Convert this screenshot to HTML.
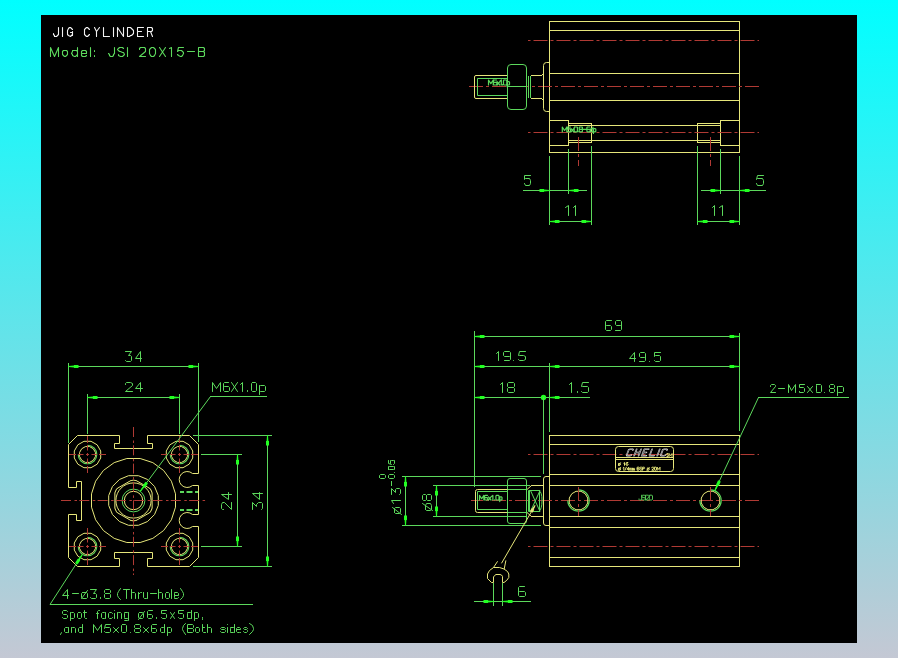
<!DOCTYPE html>
<html><head><meta charset="utf-8"><style>
html,body{margin:0;padding:0;width:898px;height:658px;overflow:hidden;font-family:"Liberation Sans",sans-serif}
body{background:linear-gradient(to bottom,#00ffff 0%,#c4c8d4 100%);position:relative}
#cad{position:absolute;left:41px;top:15px;width:816px;height:628px;background:#000}
svg{position:absolute;left:0;top:0}
</style></head><body>
<div id="cad"></div>
<svg width="898" height="658" viewBox="0 0 898 658" shape-rendering="auto">
<path d="M58.50,27.50L58.50,33.50L58.50,33.50L58.50,34.50L57.50,35.50L56.50,36.50L55.50,36.50L54.50,36.50L54.50,35.50L53.50,34.50L53.50,33.50L53.50,33.50M62.50,27.50L62.50,36.50M72.50,29.50L71.50,28.50L70.50,27.50L69.50,27.50L68.50,28.50L67.50,30.50L67.50,31.50L67.50,33.50L67.50,34.50L68.50,35.50L70.50,36.50L71.50,35.50L72.50,34.50L72.50,33.50L72.50,31.50L72.50,35.50M72.50,32.50L70.50,32.50" stroke="#f2f2f2" stroke-width="1.1" fill="none" stroke-linecap="round" stroke-linejoin="round"/>
<path d="M89.50,29.50L88.50,28.50L87.50,27.50L86.50,27.50L85.50,28.50L84.50,29.50L84.50,30.50L84.50,31.50L84.50,33.50L84.50,34.50L85.50,35.50L86.50,36.50L87.50,36.50L88.50,35.50L89.50,34.50M94.50,27.50L96.50,31.50L99.50,27.50M96.50,31.50L96.50,36.50M103.50,27.50L103.50,36.50L109.50,36.50M113.50,27.50L113.50,36.50M117.50,36.50L117.50,27.50L123.50,36.50L123.50,27.50M127.50,27.50L129.50,27.50L129.50,27.50L130.50,27.50L131.50,28.50L132.50,29.50L133.50,30.50L133.50,31.50L133.50,33.50L132.50,34.50L131.50,35.50L130.50,35.50L129.50,36.50L127.50,36.50L127.50,27.50M143.50,27.50L137.50,27.50L137.50,36.50L143.50,36.50M137.50,31.50L141.50,31.50M147.50,36.50L147.50,27.50L150.50,27.50L150.50,27.50L151.50,27.50L152.50,28.50L152.50,29.50L152.50,30.50L151.50,31.50L150.50,31.50L147.50,31.50M150.50,31.50L152.50,36.50" stroke="#f2f2f2" stroke-width="1.1" fill="none" stroke-linecap="round" stroke-linejoin="round"/>
<path d="M50.50,56.50L50.50,47.50L54.50,56.50L58.50,47.50L58.50,56.50M67.50,53.50L67.50,51.50L66.50,50.50L65.50,50.50L64.50,50.50L63.50,50.50L62.50,51.50L62.50,53.50L62.50,54.50L63.50,55.50L64.50,56.50L65.50,56.50L66.50,55.50L67.50,54.50L67.50,53.50M77.50,47.50L77.50,56.50M77.50,53.50L77.50,51.50L76.50,50.50L75.50,50.50L74.50,50.50L72.50,50.50L72.50,51.50L71.50,53.50L72.50,54.50L72.50,55.50L74.50,56.50L75.50,56.50L76.50,55.50L77.50,54.50L77.50,53.50M81.50,53.50L86.50,53.50L86.50,53.50L86.50,51.50L85.50,50.50L84.50,50.50L83.50,50.50L82.50,50.50L81.50,51.50L81.50,52.50L81.50,54.50L81.50,55.50L82.50,56.50L84.50,56.50L85.50,56.50L86.50,55.50M90.50,47.50L90.50,56.50M94.50,50.50L94.50,51.50M94.50,55.50L94.50,56.50" stroke="#5cd85c" stroke-width="1.1" fill="none" stroke-linecap="round" stroke-linejoin="round"/>
<path d="M114.50,47.50L114.50,53.50L114.50,53.50L113.50,54.50L113.50,55.50L112.50,56.50L111.50,56.50L110.50,56.50L109.50,55.50L109.50,54.50L108.50,53.50L108.50,53.50M123.50,48.50L122.50,47.50L121.50,47.50L119.50,47.50L118.50,48.50L117.50,49.50L118.50,50.50L119.50,51.50L120.50,51.50L120.50,51.50L122.50,52.50L123.50,52.50L124.50,54.50L123.50,55.50L122.50,56.50L120.50,56.50L118.50,55.50L118.50,54.50M127.50,47.50L127.50,56.50" stroke="#5cd85c" stroke-width="1.1" fill="none" stroke-linecap="round" stroke-linejoin="round"/>
<path d="M139.50,49.50L139.50,48.50L140.50,47.50L142.50,47.50L143.50,47.50L144.50,47.50L145.50,48.50L145.50,50.50L145.50,51.50L139.50,56.50L145.50,56.50M155.50,51.50L155.50,49.50L154.50,48.50L153.50,47.50L152.50,47.50L151.50,47.50L150.50,48.50L149.50,49.50L149.50,51.50L149.50,53.50L150.50,55.50L151.50,56.50L152.50,56.50L153.50,56.50L154.50,55.50L155.50,53.50L155.50,51.50M159.50,47.50L165.50,56.50M165.50,47.50L159.50,56.50M169.50,48.50L171.50,47.50L171.50,56.50M183.50,47.50L178.50,47.50L177.50,51.50L178.50,50.50L179.50,50.50L181.50,50.50L182.50,51.50L183.50,52.50L183.50,53.50L182.50,55.50L181.50,56.50L180.50,56.50L178.50,55.50L177.50,54.50M187.50,51.50L194.50,51.50M198.50,51.50L202.50,51.50L202.50,51.50L203.50,51.50L204.50,52.50L204.50,53.50L204.50,55.50L203.50,56.50L202.50,56.50L198.50,56.50L198.50,47.50L202.50,47.50L202.50,47.50L203.50,47.50L204.50,48.50L204.50,49.50L204.50,50.50L203.50,51.50L202.50,51.50" stroke="#5cd85c" stroke-width="1.1" fill="none" stroke-linecap="round" stroke-linejoin="round"/>
<rect x="549" y="21" width="191" height="1" fill="#e6e67a"/>
<rect x="549" y="152" width="191" height="1" fill="#e6e67a"/>
<rect x="549" y="21" width="1" height="132" fill="#e6e67a"/>
<rect x="739" y="21" width="1" height="132" fill="#e6e67a"/>
<rect x="549" y="30" width="191" height="1" fill="#e6e67a"/>
<rect x="549" y="73" width="191" height="1" fill="#e6e67a"/>
<rect x="549" y="100" width="191" height="1" fill="#e6e67a"/>
<rect x="549" y="120" width="20" height="1" fill="#e6e67a"/>
<rect x="549" y="145" width="20" height="1" fill="#e6e67a"/>
<rect x="549" y="120" width="1" height="26" fill="#e6e67a"/>
<rect x="568" y="120" width="1" height="26" fill="#e6e67a"/>
<rect x="720" y="120" width="20" height="1" fill="#e6e67a"/>
<rect x="720" y="145" width="20" height="1" fill="#e6e67a"/>
<rect x="720" y="120" width="1" height="26" fill="#e6e67a"/>
<rect x="739" y="120" width="1" height="26" fill="#e6e67a"/>
<rect x="568" y="123" width="24" height="1" fill="#e6e67a"/>
<rect x="568" y="142" width="24" height="1" fill="#e6e67a"/>
<rect x="568" y="123" width="1" height="20" fill="#e6e67a"/>
<rect x="591" y="123" width="1" height="20" fill="#e6e67a"/>
<rect x="697" y="123" width="24" height="1" fill="#e6e67a"/>
<rect x="697" y="142" width="24" height="1" fill="#e6e67a"/>
<rect x="697" y="123" width="1" height="20" fill="#e6e67a"/>
<rect x="720" y="123" width="1" height="20" fill="#e6e67a"/>
<rect x="568" y="125" width="153" height="1" fill="#e6e67a"/>
<rect x="568" y="140" width="153" height="1" fill="#e6e67a"/>
<line x1="528" y1="40.5" x2="759" y2="40.5" stroke="#b03a34" stroke-width="1" stroke-dasharray="14 3 3 3" stroke-dashoffset="17.5"/>
<line x1="469" y1="86.5" x2="759" y2="86.5" stroke="#b03a34" stroke-width="1" stroke-dasharray="14 3 3 3" stroke-dashoffset="0"/>
<line x1="528" y1="132.5" x2="759" y2="132.5" stroke="#b03a34" stroke-width="1" stroke-dasharray="14 3 3 3" stroke-dashoffset="17.5"/>
<line x1="578.5" y1="137" x2="578.5" y2="166" stroke="#b03a34" stroke-width="1" stroke-dasharray="14 3 3 3" stroke-dashoffset="0"/>
<line x1="710.5" y1="137" x2="710.5" y2="166" stroke="#b03a34" stroke-width="1" stroke-dasharray="14 3 3 3" stroke-dashoffset="0"/>
<path d="M507.5,75.5 L476,75.5 Q474.5,75.5 474.5,77 L474.5,97 Q474.5,98.5 476,98.5 L507.5,98.5" stroke="#e6e67a" stroke-width="1" fill="none" />
<rect x="531" y="75" width="11" height="1" fill="#e6e67a"/>
<rect x="531" y="98" width="11" height="1" fill="#e6e67a"/>
<path d="M549,62.5 L546.5,62.5 Q543.5,62.5 543.5,65.5 L543.5,108.5 Q543.5,111.5 546.5,111.5 L549,111.5" stroke="#e6e67a" stroke-width="1" fill="none" />
<line x1="541.5" y1="75.5" x2="543.5" y2="73.5" stroke="#e6e67a" stroke-width="1"/>
<line x1="541.5" y1="98.5" x2="543.5" y2="100.5" stroke="#e6e67a" stroke-width="1"/>
<path d="M507,78.5 L477.5,78.5 L477.5,95.5 L507,95.5" stroke="#5cd85c" stroke-width="1" fill="none" />
<rect x="507.5" y="64.5" width="19" height="45" rx="3.5" ry="3.5" fill="none" stroke="#5cd85c" stroke-width="1"/>
<rect x="507" y="86" width="20" height="1" fill="#5cd85c"/>
<rect x="528" y="76" width="1" height="22" fill="#5cd85c"/>
<rect x="530" y="76" width="1" height="22" fill="#5cd85c"/>
<path d="M488.50,85.00L488.50,80.00L490.86,83.61L493.22,80.00L493.22,85.00M496.53,80.00L494.03,80.00L493.48,80.56L493.48,84.44L494.03,85.00L496.25,85.00L496.81,84.44L496.81,82.94L496.25,82.39L494.03,82.39L493.48,82.94M497.06,81.67L499.84,85.00M499.84,81.67L497.06,85.00M500.10,81.00L501.32,80.00L501.32,85.00M502.49,84.72L502.49,85.00M504.02,80.00L506.25,80.00L506.80,80.56L506.80,84.44L506.25,85.00L504.02,85.00L503.47,84.44L503.47,80.56L504.02,80.00M507.06,81.67L507.06,86.67M507.06,82.22L507.61,81.67L508.94,81.67L509.50,82.22L509.50,84.44L508.94,85.00L507.61,85.00L507.06,84.44" stroke="#5cd85c" stroke-width="1.2" fill="none" stroke-linecap="round" stroke-linejoin="round"/>
<path d="M562.30,131.80L562.30,127.00L564.57,130.47L566.83,127.00L566.83,131.80M570.54,127.00L567.60,127.00L567.34,129.13L567.87,128.87L570.00,128.87L570.54,129.40L570.54,131.27L570.00,131.80L567.87,131.80L567.34,131.27M571.04,128.60L573.71,131.80M573.71,128.60L571.04,131.80M574.75,127.00L576.88,127.00L577.41,127.53L577.41,131.27L576.88,131.80L574.75,131.80L574.21,131.27L574.21,127.53L574.75,127.00M578.02,131.53L578.02,131.80M579.76,129.29L579.22,128.76L579.22,127.53L579.76,127.00L581.89,127.00L582.42,127.53L582.42,128.76L581.89,129.29L579.76,129.29L579.22,129.83L579.22,131.27L579.76,131.80L581.89,131.80L582.42,131.27L582.42,129.83L581.89,129.29M582.93,129.40L586.39,129.40M589.83,127.00L587.43,127.00L586.90,127.53L586.90,131.27L587.43,131.80L589.56,131.80L590.10,131.27L590.10,129.83L589.56,129.29L587.43,129.29L586.90,129.83M592.95,127.00L592.95,131.80M592.95,129.13L592.42,128.60L591.14,128.60L590.60,129.13L590.60,131.27L591.14,131.80L592.42,131.80L592.95,131.27M593.45,128.60L593.45,133.40M593.45,129.13L593.99,128.60L595.27,128.60L595.80,129.13L595.80,131.27L595.27,131.80L593.99,131.80L593.45,131.27" stroke="#5cd85c" stroke-width="1.2" fill="none" stroke-linecap="round" stroke-linejoin="round"/>
<rect x="549" y="156" width="1" height="69" fill="#5cd85c"/>
<rect x="568" y="149" width="1" height="45" fill="#5cd85c"/>
<rect x="591" y="146" width="1" height="79" fill="#5cd85c"/>
<rect x="697" y="146" width="1" height="79" fill="#5cd85c"/>
<rect x="720" y="149" width="1" height="45" fill="#5cd85c"/>
<rect x="739" y="156" width="1" height="69" fill="#5cd85c"/>
<rect x="523" y="190" width="64" height="1" fill="#5cd85c"/>
<path d="M549.50,191.00 L544.00,191.40 L544.00,192.00 L539.50,192.00 L539.50,189.00 L544.00,189.00 L544.00,189.60 L549.50,190.00 Z" fill="#22ff22"/>
<path d="M568.50,190.00 L574.00,189.60 L574.00,189.00 L578.50,189.00 L578.50,192.00 L574.00,192.00 L574.00,191.40 L568.50,191.00 Z" fill="#22ff22"/>
<rect x="549" y="221" width="43" height="1" fill="#5cd85c"/>
<path d="M549.50,221.00 L555.00,220.60 L555.00,220.00 L559.50,220.00 L559.50,223.00 L555.00,223.00 L555.00,222.40 L549.50,222.00 Z" fill="#22ff22"/>
<path d="M591.50,222.00 L586.00,222.40 L586.00,223.00 L581.50,223.00 L581.50,220.00 L586.00,220.00 L586.00,220.60 L591.50,221.00 Z" fill="#22ff22"/>
<rect x="701" y="190" width="65" height="1" fill="#5cd85c"/>
<path d="M720.50,191.00 L715.00,191.40 L715.00,192.00 L710.50,192.00 L710.50,189.00 L715.00,189.00 L715.00,189.60 L720.50,190.00 Z" fill="#22ff22"/>
<path d="M739.50,190.00 L745.00,189.60 L745.00,189.00 L749.50,189.00 L749.50,192.00 L745.00,192.00 L745.00,191.40 L739.50,191.00 Z" fill="#22ff22"/>
<rect x="697" y="221" width="43" height="1" fill="#5cd85c"/>
<path d="M697.50,221.00 L703.00,220.60 L703.00,220.00 L707.50,220.00 L707.50,223.00 L703.00,223.00 L703.00,222.40 L697.50,222.00 Z" fill="#22ff22"/>
<path d="M739.50,222.00 L734.00,222.40 L734.00,223.00 L729.50,223.00 L729.50,220.00 L734.00,220.00 L734.00,220.60 L739.50,221.00 Z" fill="#22ff22"/>
<path d="M530.50,175.50L524.50,175.50L524.50,179.50L525.50,178.50L529.50,178.50L530.50,180.50L530.50,183.50L529.50,185.50L525.50,185.50L524.50,183.50" stroke="#5cd85c" stroke-width="1.0" fill="none" stroke-linecap="round" stroke-linejoin="round"/>
<path d="M565.50,207.50L568.50,205.50L568.50,215.50M573.50,207.50L575.50,205.50L575.50,215.50" stroke="#5cd85c" stroke-width="1.0" fill="none" stroke-linecap="round" stroke-linejoin="round"/>
<path d="M763.50,175.50L757.50,175.50L756.50,179.50L757.50,178.50L762.50,178.50L763.50,180.50L763.50,183.50L762.50,185.50L757.50,185.50L756.50,183.50" stroke="#5cd85c" stroke-width="1.0" fill="none" stroke-linecap="round" stroke-linejoin="round"/>
<path d="M712.50,207.50L714.50,205.50L714.50,215.50M719.50,207.50L722.50,205.50L722.50,215.50" stroke="#5cd85c" stroke-width="1.0" fill="none" stroke-linecap="round" stroke-linejoin="round"/>
<path d="M77.5,435.5 L119.5,435.5 L119.5,443.5 L114.5,443.5 L114.5,448.5 L152.5,448.5 L152.5,443.5 L147.5,443.5 L147.5,435.5 L189.5,435.5 L198.5,444.5 L198.5,473.5 L192.5,473.5 A8,8 0 1 0 192.5,485.5 L198.5,485.5 L198.5,514.5 L192.5,514.5 A8,8 0 1 0 192.5,526.5 L198.5,526.5 L198.5,557.5 L189.5,566.5 L147.5,566.5 L147.5,558.5 L152.5,558.5 L152.5,552.5 L114.5,552.5 L114.5,558.5 L119.5,558.5 L119.5,566.5 L77.5,566.5 L68.5,557.5 L68.5,514.5 L76.5,514.5 L76.5,520.5 L81.5,520.5 L81.5,481.5 L76.5,481.5 L76.5,487.5 L68.5,487.5 L68.5,444.5 Z" stroke="#e6e67a" stroke-width="1" fill="none" />
<line x1="180" y1="492" x2="198" y2="492" stroke="#5cd85c" stroke-width="2" stroke-dasharray="4 2.5 6 2.5 4"/>
<line x1="180" y1="510" x2="198" y2="510" stroke="#5cd85c" stroke-width="2" stroke-dasharray="4 2.5 6 2.5 4"/>
<path d="M100.70,458.04 L97.16,464.16 L91.04,467.70 L83.96,467.70 L77.84,464.16 L74.30,458.04 L74.30,450.96 L77.84,444.84 L83.96,441.30 L91.04,441.30 L97.16,444.84 L100.70,450.96 Z" stroke="#e6e67a" stroke-width="1" fill="none" />
<path d="M78.2,454.5 A9.3,9.3 0 1 0 87.5,445.2" stroke="#5cd85c" stroke-width="1.1" fill="none" />
<path d="M95.40,456.62 L93.28,460.28 L89.62,462.40 L85.38,462.40 L81.72,460.28 L79.60,456.62 L79.60,452.38 L81.72,448.72 L85.38,446.60 L89.62,446.60 L93.28,448.72 L95.40,452.38 Z" stroke="#e6e67a" stroke-width="1" fill="none" />
<rect x="69" y="454" width="7" height="1" fill="#b03a34"/>
<rect x="87" y="436" width="1" height="7" fill="#b03a34"/>
<rect x="78" y="454" width="5.5" height="1" fill="#b03a34"/>
<rect x="87" y="445" width="1" height="5.5" fill="#b03a34"/>
<rect x="99" y="454" width="7" height="1" fill="#b03a34"/>
<rect x="87" y="466" width="1" height="7" fill="#b03a34"/>
<rect x="91.5" y="454" width="5.5" height="1" fill="#b03a34"/>
<rect x="87" y="458.5" width="1" height="5.5" fill="#b03a34"/>
<rect x="86" y="454" width="3" height="1" fill="#b03a34"/>
<rect x="87" y="453" width="1" height="3" fill="#b03a34"/>
<path d="M100.70,550.04 L97.16,556.16 L91.04,559.70 L83.96,559.70 L77.84,556.16 L74.30,550.04 L74.30,542.96 L77.84,536.84 L83.96,533.30 L91.04,533.30 L97.16,536.84 L100.70,542.96 Z" stroke="#e6e67a" stroke-width="1" fill="none" />
<path d="M78.2,546.5 A9.3,9.3 0 1 0 87.5,537.2" stroke="#5cd85c" stroke-width="1.1" fill="none" />
<path d="M95.40,548.62 L93.28,552.28 L89.62,554.40 L85.38,554.40 L81.72,552.28 L79.60,548.62 L79.60,544.38 L81.72,540.72 L85.38,538.60 L89.62,538.60 L93.28,540.72 L95.40,544.38 Z" stroke="#e6e67a" stroke-width="1" fill="none" />
<rect x="69" y="546" width="7" height="1" fill="#b03a34"/>
<rect x="87" y="528" width="1" height="7" fill="#b03a34"/>
<rect x="78" y="546" width="5.5" height="1" fill="#b03a34"/>
<rect x="87" y="537" width="1" height="5.5" fill="#b03a34"/>
<rect x="99" y="546" width="7" height="1" fill="#b03a34"/>
<rect x="87" y="558" width="1" height="7" fill="#b03a34"/>
<rect x="91.5" y="546" width="5.5" height="1" fill="#b03a34"/>
<rect x="87" y="550.5" width="1" height="5.5" fill="#b03a34"/>
<rect x="86" y="546" width="3" height="1" fill="#b03a34"/>
<rect x="87" y="545" width="1" height="3" fill="#b03a34"/>
<path d="M192.70,458.04 L189.16,464.16 L183.04,467.70 L175.96,467.70 L169.84,464.16 L166.30,458.04 L166.30,450.96 L169.84,444.84 L175.96,441.30 L183.04,441.30 L189.16,444.84 L192.70,450.96 Z" stroke="#e6e67a" stroke-width="1" fill="none" />
<path d="M170.2,454.5 A9.3,9.3 0 1 0 179.5,445.2" stroke="#5cd85c" stroke-width="1.1" fill="none" />
<path d="M187.40,456.62 L185.28,460.28 L181.62,462.40 L177.38,462.40 L173.72,460.28 L171.60,456.62 L171.60,452.38 L173.72,448.72 L177.38,446.60 L181.62,446.60 L185.28,448.72 L187.40,452.38 Z" stroke="#e6e67a" stroke-width="1" fill="none" />
<rect x="161" y="454" width="7" height="1" fill="#b03a34"/>
<rect x="179" y="436" width="1" height="7" fill="#b03a34"/>
<rect x="170" y="454" width="5.5" height="1" fill="#b03a34"/>
<rect x="179" y="445" width="1" height="5.5" fill="#b03a34"/>
<rect x="191" y="454" width="7" height="1" fill="#b03a34"/>
<rect x="179" y="466" width="1" height="7" fill="#b03a34"/>
<rect x="183.5" y="454" width="5.5" height="1" fill="#b03a34"/>
<rect x="179" y="458.5" width="1" height="5.5" fill="#b03a34"/>
<rect x="178" y="454" width="3" height="1" fill="#b03a34"/>
<rect x="179" y="453" width="1" height="3" fill="#b03a34"/>
<path d="M192.70,550.04 L189.16,556.16 L183.04,559.70 L175.96,559.70 L169.84,556.16 L166.30,550.04 L166.30,542.96 L169.84,536.84 L175.96,533.30 L183.04,533.30 L189.16,536.84 L192.70,542.96 Z" stroke="#e6e67a" stroke-width="1" fill="none" />
<path d="M170.2,546.5 A9.3,9.3 0 1 0 179.5,537.2" stroke="#5cd85c" stroke-width="1.1" fill="none" />
<path d="M187.40,548.62 L185.28,552.28 L181.62,554.40 L177.38,554.40 L173.72,552.28 L171.60,548.62 L171.60,544.38 L173.72,540.72 L177.38,538.60 L181.62,538.60 L185.28,540.72 L187.40,544.38 Z" stroke="#e6e67a" stroke-width="1" fill="none" />
<rect x="161" y="546" width="7" height="1" fill="#b03a34"/>
<rect x="179" y="528" width="1" height="7" fill="#b03a34"/>
<rect x="170" y="546" width="5.5" height="1" fill="#b03a34"/>
<rect x="179" y="537" width="1" height="5.5" fill="#b03a34"/>
<rect x="191" y="546" width="7" height="1" fill="#b03a34"/>
<rect x="179" y="558" width="1" height="7" fill="#b03a34"/>
<rect x="183.5" y="546" width="5.5" height="1" fill="#b03a34"/>
<rect x="179" y="550.5" width="1" height="5.5" fill="#b03a34"/>
<rect x="178" y="546" width="3" height="1" fill="#b03a34"/>
<rect x="179" y="545" width="1" height="3" fill="#b03a34"/>
<path d="M175.50,507.15 L171.39,519.81 L163.57,530.57 L152.81,538.39 L140.15,542.50 L126.85,542.50 L114.19,538.39 L103.43,530.57 L95.61,519.81 L91.50,507.15 L91.50,493.85 L95.61,481.19 L103.43,470.43 L114.19,462.61 L126.85,458.50 L140.15,458.50 L152.81,462.61 L163.57,470.43 L171.39,481.19 L175.50,493.85 Z" stroke="#e6e67a" stroke-width="1" fill="none" />
<path d="M158.30,505.43 L154.52,514.55 L147.55,521.52 L138.43,525.30 L128.57,525.30 L119.45,521.52 L112.48,514.55 L108.70,505.43 L108.70,495.57 L112.48,486.45 L119.45,479.48 L128.57,475.70 L138.43,475.70 L147.55,479.48 L154.52,486.45 L158.30,495.57 Z" stroke="#e6e67a" stroke-width="1" fill="none" />
<clipPath id="hexclip"><circle cx="133.5" cy="500.5" r="20.8"/></clipPath>
<clipPath id="arcclip"><path d="M133.50,479.00 L114.88,489.75 L114.88,511.25 L133.50,522.00 L152.12,511.25 L152.12,489.75 Z"/></clipPath>
<path d="M133.50,479.00 L114.88,489.75 L114.88,511.25 L133.50,522.00 L152.12,511.25 L152.12,489.75 Z" stroke="#e6e67a" stroke-width="1" fill="none" clip-path="url(#hexclip)"/>
<circle cx="133.5" cy="500.5" r="20.3" stroke="#e6e67a" stroke-width="1" fill="none" clip-path="url(#arcclip)"/>
<circle cx="133.5" cy="500.5" r="17.6" stroke="#e6e67a" stroke-width="1" fill="none"/>
<circle cx="133.5" cy="500.5" r="11.4" stroke="#5cd85c" stroke-width="1" fill="none"/>
<circle cx="133.5" cy="500.5" r="9.2" stroke="#e6e67a" stroke-width="1" fill="none"/>
<line x1="61" y1="500.5" x2="207" y2="500.5" stroke="#b03a34" stroke-width="1" stroke-dasharray="10 3.5 2.5 2.3"/>
<line x1="133.5" y1="427" x2="133.5" y2="575" stroke="#b03a34" stroke-width="1" stroke-dasharray="10 3.5 2.5 2.3"/>
<rect x="68" y="363" width="1" height="80" fill="#5cd85c"/>
<rect x="198" y="363" width="1" height="79" fill="#5cd85c"/>
<rect x="68" y="366" width="131" height="1" fill="#5cd85c"/>
<path d="M68.50,366.00 L74.00,365.60 L74.00,365.00 L78.50,365.00 L78.50,368.00 L74.00,368.00 L74.00,367.40 L68.50,367.00 Z" fill="#22ff22"/>
<path d="M198.50,367.00 L193.00,367.40 L193.00,368.00 L188.50,368.00 L188.50,365.00 L193.00,365.00 L193.00,365.60 L198.50,366.00 Z" fill="#22ff22"/>
<rect x="87" y="394" width="1" height="40" fill="#5cd85c"/>
<rect x="179" y="394" width="1" height="40" fill="#5cd85c"/>
<rect x="87" y="397" width="93" height="1" fill="#5cd85c"/>
<path d="M87.50,397.00 L93.00,396.60 L93.00,396.00 L97.50,396.00 L97.50,399.00 L93.00,399.00 L93.00,398.40 L87.50,398.00 Z" fill="#22ff22"/>
<path d="M179.50,398.00 L174.00,398.40 L174.00,399.00 L169.50,399.00 L169.50,396.00 L174.00,396.00 L174.00,396.60 L179.50,397.00 Z" fill="#22ff22"/>
<path d="M125.50,351.50L131.50,351.50L128.50,355.50L130.50,355.50L131.50,356.50L131.50,360.50L130.50,361.50L126.50,361.50L125.50,360.50M140.50,361.50L140.50,351.50L135.50,358.50L141.50,358.50" stroke="#5cd85c" stroke-width="1.0" fill="none" stroke-linecap="round" stroke-linejoin="round"/>
<path d="M125.50,384.50L125.50,383.50L126.50,382.50L130.50,382.50L132.50,383.50L132.50,385.50L125.50,391.50L132.50,391.50M140.50,391.50L140.50,382.50L135.50,388.50L142.50,388.50" stroke="#5cd85c" stroke-width="1.0" fill="none" stroke-linecap="round" stroke-linejoin="round"/>
<rect x="193" y="435" width="79" height="1" fill="#5cd85c"/>
<rect x="193" y="566" width="79" height="1" fill="#5cd85c"/>
<rect x="267" y="435" width="1" height="132" fill="#5cd85c"/>
<path d="M268.00,435.50 L268.40,441.00 L269.00,441.00 L269.00,445.50 L266.00,445.50 L266.00,441.00 L266.60,441.00 L267.00,435.50 Z" fill="#22ff22"/>
<path d="M267.00,566.50 L266.60,561.00 L266.00,561.00 L266.00,556.50 L269.00,556.50 L269.00,561.00 L268.40,561.00 L268.00,566.50 Z" fill="#22ff22"/>
<rect x="201" y="454" width="41" height="1" fill="#5cd85c"/>
<rect x="201" y="546" width="41" height="1" fill="#5cd85c"/>
<rect x="237" y="454" width="1" height="93" fill="#5cd85c"/>
<path d="M238.00,454.50 L238.40,460.00 L239.00,460.00 L239.00,464.50 L236.00,464.50 L236.00,460.00 L236.60,460.00 L237.00,454.50 Z" fill="#22ff22"/>
<path d="M237.00,546.50 L236.60,541.00 L236.00,541.00 L236.00,536.50 L239.00,536.50 L239.00,541.00 L238.40,541.00 L238.00,546.50 Z" fill="#22ff22"/>
<g transform="rotate(-90)"><path d="M-509.50,252.50L-502.50,252.50L-506.50,256.50L-504.50,256.50L-502.50,258.50L-502.50,261.50L-503.50,262.50L-508.50,262.50L-509.50,261.50M-493.50,262.50L-493.50,252.50L-499.50,259.50L-492.50,259.50" stroke="#5cd85c" stroke-width="1.0" fill="none" stroke-linecap="round" stroke-linejoin="round"/></g>
<g transform="rotate(-90)"><path d="M-509.50,223.50L-509.50,222.50L-508.50,221.50L-504.50,221.50L-502.50,222.50L-502.50,224.50L-509.50,231.50L-502.50,231.50M-494.50,231.50L-494.50,221.50L-499.50,228.50L-492.50,228.50" stroke="#5cd85c" stroke-width="1.0" fill="none" stroke-linecap="round" stroke-linejoin="round"/></g>
<rect x="210" y="396" width="57" height="1" fill="#5cd85c"/>
<line x1="210.5" y1="396.5" x2="140.2" y2="491.4" stroke="#5cd85c" stroke-width="1"/>
<path d="M139.80,491.10 L143.08,486.01 L142.60,485.65 L145.55,481.67 L147.96,483.46 L145.01,487.44 L144.53,487.08 L140.60,491.70 Z" fill="#22ff22"/>
<path d="M212.50,391.50L212.50,382.50L216.50,388.50L220.50,382.50L220.50,391.50M228.50,382.50L224.50,382.50L223.50,383.50L223.50,390.50L224.50,391.50L228.50,391.50L229.50,390.50L229.50,387.50L228.50,386.50L224.50,386.50L223.50,387.50M231.50,382.50L237.50,391.50M237.50,382.50L231.50,391.50M240.50,384.50L242.50,382.50L242.50,391.50M247.50,390.50L247.50,391.50M252.50,382.50L255.50,382.50L256.50,383.50L256.50,390.50L255.50,391.50L252.50,391.50L251.50,390.50L251.50,383.50L252.50,382.50M259.50,385.50L259.50,394.50M259.50,386.50L260.50,385.50L264.50,385.50L265.50,386.50L265.50,390.50L264.50,391.50L260.50,391.50L259.50,390.50" stroke="#5cd85c" stroke-width="1.0" fill="none" stroke-linecap="round" stroke-linejoin="round"/>
<rect x="50" y="604" width="203" height="1" fill="#5cd85c"/>
<line x1="50" y1="604.5" x2="82.3" y2="554.5" stroke="#5cd85c" stroke-width="1"/>
<path d="M82.72,554.77 L79.75,560.06 L80.25,560.39 L77.55,564.53 L75.04,562.90 L77.74,558.75 L78.24,559.08 L81.88,554.23 Z" fill="#22ff22"/>
<path d="M67.50,598.50L67.50,589.50L62.50,595.50L68.50,595.50M72.50,593.50L78.50,593.50M82.50,592.50L86.50,592.50L87.50,593.50L87.50,597.50L86.50,598.50L82.50,598.50L81.50,597.50L81.50,593.50L82.50,592.50M81.50,598.50L87.50,590.50M90.50,589.50L96.50,589.50L93.50,593.50L95.50,593.50L96.50,594.50L96.50,597.50L95.50,598.50L91.50,598.50L90.50,597.50M100.50,597.50L100.50,598.50M105.50,593.50L104.50,592.50L104.50,590.50L105.50,589.50L109.50,589.50L110.50,590.50L110.50,592.50L109.50,593.50L105.50,593.50L104.50,594.50L104.50,597.50L105.50,598.50L109.50,598.50L110.50,597.50L110.50,594.50L109.50,593.50" stroke="#5cd85c" stroke-width="1.0" fill="none" stroke-linecap="round" stroke-linejoin="round"/>
<path d="M120.50,588.50L118.50,591.50L117.50,593.50L117.50,595.50L118.50,597.50L120.50,599.50M123.50,589.50L129.50,589.50M126.50,589.50L126.50,598.50M131.50,589.50L131.50,598.50M131.50,593.50L132.50,592.50L134.50,592.50L135.50,593.50L135.50,598.50M138.50,592.50L138.50,598.50M138.50,594.50L140.50,592.50L141.50,592.50M143.50,592.50L143.50,597.50L144.50,598.50L146.50,598.50L147.50,597.50M147.50,592.50L147.50,598.50M150.50,593.50L156.50,593.50M158.50,589.50L158.50,598.50M158.50,593.50L159.50,592.50L161.50,592.50L162.50,593.50L162.50,598.50M166.50,592.50L168.50,592.50L169.50,593.50L169.50,597.50L168.50,598.50L166.50,598.50L165.50,597.50L165.50,593.50L166.50,592.50M171.50,589.50L171.50,598.50M174.50,595.50L178.50,595.50L178.50,593.50L177.50,592.50L174.50,592.50L174.50,593.50L174.50,597.50L174.50,598.50L177.50,598.50L178.50,597.50M180.50,588.50L182.50,591.50L183.50,593.50L183.50,595.50L182.50,597.50L180.50,599.50" stroke="#5cd85c" stroke-width="1.0" fill="none" stroke-linecap="round" stroke-linejoin="round"/>
<path d="M67.50,611.50L66.50,610.50L63.50,610.50L62.50,611.50L62.50,613.50L63.50,614.50L66.50,614.50L67.50,615.50L67.50,617.50L66.50,618.50L63.50,618.50L62.50,617.50M70.50,612.50L70.50,620.50M70.50,613.50L71.50,612.50L73.50,612.50L74.50,613.50L74.50,617.50L73.50,618.50L71.50,618.50L70.50,617.50M78.50,612.50L80.50,612.50L81.50,613.50L81.50,617.50L80.50,618.50L78.50,618.50L77.50,617.50L77.50,613.50L78.50,612.50M84.50,610.50L84.50,617.50L85.50,618.50L86.50,618.50M83.50,612.50L86.50,612.50" stroke="#5cd85c" stroke-width="1.0" fill="none" stroke-linecap="round" stroke-linejoin="round"/>
<path d="M99.50,610.50L98.50,610.50L98.50,610.50L97.50,611.50L97.50,618.50M96.50,613.50L98.50,613.50M105.50,612.50L105.50,618.50M105.50,613.50L104.50,612.50L102.50,612.50L101.50,613.50L101.50,617.50L102.50,618.50L104.50,618.50L105.50,617.50M112.50,613.50L111.50,612.50L109.50,612.50L108.50,613.50L108.50,617.50L109.50,618.50L111.50,618.50L112.50,617.50M114.50,613.50L114.50,618.50M114.50,610.50L114.50,610.50M117.50,612.50L117.50,618.50M117.50,613.50L118.50,612.50L120.50,612.50L121.50,613.50L121.50,618.50M128.50,612.50L128.50,620.50L127.50,620.50L124.50,620.50L124.50,620.50M128.50,613.50L127.50,612.50L124.50,612.50L124.50,613.50L124.50,617.50L124.50,618.50L127.50,618.50L128.50,617.50" stroke="#5cd85c" stroke-width="1.0" fill="none" stroke-linecap="round" stroke-linejoin="round"/>
<path d="M139.50,612.50L142.50,612.50L143.50,613.50L143.50,617.50L142.50,618.50L139.50,618.50L138.50,617.50L138.50,613.50L139.50,612.50M138.50,619.50L144.50,611.50M152.50,610.50L148.50,610.50L147.50,611.50L147.50,617.50L148.50,618.50L151.50,618.50L152.50,617.50L152.50,615.50L151.50,614.50L148.50,614.50L147.50,615.50M156.50,617.50L156.50,618.50M166.50,610.50L161.50,610.50L161.50,613.50L162.50,613.50L165.50,613.50L166.50,614.50L166.50,617.50L165.50,618.50L162.50,618.50L161.50,617.50M170.50,612.50L174.50,618.50M174.50,612.50L170.50,618.50M183.50,610.50L178.50,610.50L178.50,613.50L179.50,613.50L182.50,613.50L183.50,614.50L183.50,617.50L182.50,618.50L179.50,618.50L178.50,617.50M191.50,610.50L191.50,618.50M191.50,613.50L190.50,612.50L187.50,612.50L187.50,613.50L187.50,617.50L187.50,618.50L190.50,618.50L191.50,617.50M194.50,612.50L194.50,620.50M194.50,613.50L195.50,612.50L197.50,612.50L198.50,613.50L198.50,617.50L197.50,618.50L195.50,618.50L194.50,617.50M202.50,617.50L202.50,618.50L202.50,619.50" stroke="#5cd85c" stroke-width="1.0" fill="none" stroke-linecap="round" stroke-linejoin="round"/>
<path d="M61.50,632.50L61.50,632.50L60.50,634.50M68.50,627.50L68.50,632.50M68.50,628.50L67.50,627.50L65.50,627.50L64.50,628.50L64.50,631.50L65.50,632.50L67.50,632.50L68.50,631.50M71.50,627.50L71.50,632.50M71.50,628.50L72.50,627.50L74.50,627.50L75.50,628.50L75.50,632.50M82.50,624.50L82.50,632.50M82.50,628.50L81.50,627.50L79.50,627.50L78.50,628.50L78.50,631.50L79.50,632.50L81.50,632.50L82.50,631.50" stroke="#5cd85c" stroke-width="1.0" fill="none" stroke-linecap="round" stroke-linejoin="round"/>
<path d="M93.50,632.50L93.50,624.50L97.50,630.50L101.50,624.50L101.50,632.50M110.50,624.50L105.50,624.50L104.50,628.50L105.50,627.50L109.50,627.50L110.50,628.50L110.50,631.50L109.50,632.50L105.50,632.50L104.50,631.50M113.50,627.50L118.50,632.50M118.50,627.50L113.50,632.50M122.50,624.50L125.50,624.50L126.50,625.50L126.50,631.50L125.50,632.50L122.50,632.50L121.50,631.50L121.50,625.50L122.50,624.50M130.50,632.50L130.50,632.50M135.50,628.50L134.50,627.50L134.50,625.50L135.50,624.50L139.50,624.50L140.50,625.50L140.50,627.50L139.50,628.50L135.50,628.50L134.50,629.50L134.50,631.50L135.50,632.50L139.50,632.50L140.50,631.50L140.50,629.50L139.50,628.50M143.50,627.50L148.50,632.50M148.50,627.50L143.50,632.50M156.50,624.50L152.50,624.50L151.50,625.50L151.50,631.50L152.50,632.50L155.50,632.50L156.50,631.50L156.50,629.50L155.50,628.50L152.50,628.50L151.50,629.50M164.50,624.50L164.50,632.50M164.50,628.50L163.50,627.50L161.50,627.50L160.50,628.50L160.50,631.50L161.50,632.50L163.50,632.50L164.50,631.50M167.50,627.50L167.50,635.50M167.50,628.50L168.50,627.50L170.50,627.50L171.50,628.50L171.50,631.50L170.50,632.50L168.50,632.50L167.50,631.50" stroke="#5cd85c" stroke-width="1.0" fill="none" stroke-linecap="round" stroke-linejoin="round"/>
<path d="M185.50,623.50L183.50,625.50L182.50,628.50L182.50,629.50L183.50,631.50L185.50,634.50M187.50,628.50L192.50,628.50L193.50,629.50L193.50,631.50L192.50,632.50L187.50,632.50L187.50,624.50L192.50,624.50L193.50,625.50L193.50,627.50L192.50,628.50M196.50,627.50L198.50,627.50L199.50,628.50L199.50,631.50L198.50,632.50L196.50,632.50L195.50,631.50L195.50,628.50L196.50,627.50M202.50,624.50L202.50,631.50L203.50,632.50L205.50,632.50M202.50,627.50L204.50,627.50M207.50,624.50L207.50,632.50M207.50,628.50L208.50,627.50L210.50,627.50L211.50,628.50L211.50,632.50" stroke="#5cd85c" stroke-width="1.0" fill="none" stroke-linecap="round" stroke-linejoin="round"/>
<path d="M225.50,628.50L224.50,627.50L221.50,627.50L220.50,628.50L220.50,628.50L221.50,629.50L224.50,629.50L225.50,630.50L225.50,631.50L224.50,632.50L221.50,632.50L220.50,631.50M227.50,627.50L227.50,632.50M227.50,624.50L227.50,624.50M234.50,624.50L234.50,632.50M234.50,628.50L233.50,627.50L230.50,627.50L230.50,628.50L230.50,631.50L230.50,632.50L233.50,632.50L234.50,631.50M236.50,629.50L240.50,629.50L240.50,628.50L239.50,627.50L237.50,627.50L236.50,628.50L236.50,631.50L237.50,632.50L239.50,632.50L240.50,632.50M247.50,628.50L246.50,627.50L244.50,627.50L243.50,628.50L243.50,628.50L244.50,629.50L246.50,629.50L247.50,630.50L247.50,631.50L246.50,632.50L244.50,632.50L243.50,631.50M249.50,623.50L252.50,625.50L253.50,628.50L253.50,629.50L252.50,631.50L249.50,634.50" stroke="#5cd85c" stroke-width="1.0" fill="none" stroke-linecap="round" stroke-linejoin="round"/>
<rect x="549" y="435" width="191" height="1" fill="#e6e67a"/>
<rect x="549" y="566" width="191" height="1" fill="#e6e67a"/>
<rect x="549" y="435" width="1" height="132" fill="#e6e67a"/>
<rect x="739" y="435" width="1" height="132" fill="#e6e67a"/>
<rect x="549" y="444" width="191" height="1" fill="#e6e67a"/>
<rect x="549" y="474" width="191" height="1" fill="#e6e67a"/>
<rect x="549" y="485" width="191" height="1" fill="#e6e67a"/>
<rect x="549" y="516" width="191" height="1" fill="#e6e67a"/>
<rect x="549" y="527" width="191" height="1" fill="#e6e67a"/>
<rect x="549" y="557" width="191" height="1" fill="#e6e67a"/>
<line x1="528" y1="454.5" x2="759" y2="454.5" stroke="#b03a34" stroke-width="1" stroke-dasharray="14 3 3 3" stroke-dashoffset="17.5"/>
<line x1="471" y1="500.5" x2="759" y2="500.5" stroke="#b03a34" stroke-width="1" stroke-dasharray="14 3 3 3" stroke-dashoffset="2"/>
<line x1="528" y1="546.5" x2="759" y2="546.5" stroke="#b03a34" stroke-width="1" stroke-dasharray="14 3 3 3" stroke-dashoffset="17.5"/>
<path d="M587.70,502.97 L585.23,507.23 L580.97,509.70 L576.03,509.70 L571.77,507.23 L569.30,502.97 L569.30,498.03 L571.77,493.77 L576.03,491.30 L580.97,491.30 L585.23,493.77 L587.70,498.03 Z" stroke="#e6e67a" stroke-width="1" fill="none" />
<path d="M567.8,500.5 A10.7,10.7 0 1 0 578.5,489.8" stroke="#5cd85c" stroke-width="1.2" fill="none" />
<line x1="578.5" y1="485" x2="578.5" y2="516" stroke="#b03a34" stroke-width="1" stroke-dasharray="14 3 3 3" stroke-dashoffset="-2"/>
<path d="M719.70,502.97 L717.23,507.23 L712.97,509.70 L708.03,509.70 L703.77,507.23 L701.30,502.97 L701.30,498.03 L703.77,493.77 L708.03,491.30 L712.97,491.30 L717.23,493.77 L719.70,498.03 Z" stroke="#e6e67a" stroke-width="1" fill="none" />
<path d="M699.8,500.5 A10.7,10.7 0 1 0 710.5,489.8" stroke="#5cd85c" stroke-width="1.2" fill="none" />
<line x1="710.5" y1="485" x2="710.5" y2="516" stroke="#b03a34" stroke-width="1" stroke-dasharray="14 3 3 3" stroke-dashoffset="-2"/>
<path d="M549,476.5 L546,476.5 Q543.5,476.5 543.5,479 L543.5,523 Q543.5,525.5 546,525.5 L549,525.5" stroke="#e6e67a" stroke-width="1" fill="none" />
<rect x="531" y="485" width="13" height="1" fill="#e6e67a"/>
<rect x="531" y="516" width="13" height="1" fill="#e6e67a"/>
<line x1="527" y1="489.5" x2="531.5" y2="485.5" stroke="#e6e67a" stroke-width="1"/>
<line x1="527" y1="512.5" x2="531.5" y2="516.5" stroke="#e6e67a" stroke-width="1"/>
<path d="M528.5,490.5 L539,490.5 Q542,492 542,500.5 Q542,509 539,511.5 L528.5,511.5 Z" stroke="#5cd85c" stroke-width="1" fill="none" />
<rect x="529" y="490" width="1" height="22" fill="#5cd85c"/>
<rect x="539" y="490" width="1" height="22" fill="#5cd85c"/>
<line x1="530.5" y1="490.5" x2="540" y2="511.5" stroke="#5cd85c" stroke-width="1"/>
<line x1="540" y1="490.5" x2="530.5" y2="511.5" stroke="#5cd85c" stroke-width="1"/>
<path d="M510,478.5 L524,478.5 Q526.5,478.5 526.5,481 L526.5,521 Q526.5,523.5 524,523.5 L510,523.5 Q507.5,523.5 507.5,521 L507.5,481 Q507.5,478.5 510,478.5 Z" stroke="#5cd85c" stroke-width="1" fill="none" />
<rect x="507" y="489" width="20" height="1" fill="#5cd85c"/>
<rect x="507" y="512" width="20" height="1" fill="#5cd85c"/>
<path d="M507.5,489.5 L477.5,489.5 Q475.5,489.5 475.5,491.5 L475.5,510.5 Q475.5,512.5 477.5,512.5 L507.5,512.5" stroke="#e6e67a" stroke-width="1" fill="none" />
<path d="M507,491.5 L477.5,491.5 L477.5,509.5 L507,509.5" stroke="#5cd85c" stroke-width="1" fill="none" />
<path d="M479.50,500.00L479.50,495.40L481.67,498.72L483.84,495.40L483.84,500.00M487.42,495.40L485.12,495.40L484.61,495.91L484.61,499.49L485.12,500.00L487.16,500.00L487.68,499.49L487.68,498.11L487.16,497.60L485.12,497.60L484.61,498.11M488.44,496.93L491.00,500.00M491.00,496.93L488.44,500.00M491.76,496.32L492.88,495.40L492.88,500.00M494.49,499.74L494.49,500.00M496.43,495.40L498.48,495.40L498.99,495.91L498.99,499.49L498.48,500.00L496.43,500.00L495.92,499.49L495.92,495.91L496.43,495.40M499.75,496.93L499.75,501.53M499.75,497.44L500.26,496.93L501.49,496.93L502.00,497.44L502.00,499.49L501.49,500.00L500.26,500.00L499.75,499.49" stroke="#5cd85c" stroke-width="1.2" fill="none" stroke-linecap="round" stroke-linejoin="round"/>
<path d="M618.5,446.5 L670.5,446.5 Q673.5,446.5 673.5,449.5 L673.5,468.5 Q673.5,471.5 670.5,471.5 L618.5,471.5 Q615.5,471.5 615.5,468.5 L615.5,449.5 Q615.5,446.5 618.5,446.5 Z" stroke="#e6e67a" stroke-width="1" fill="none" />
<rect x="615" y="457" width="59" height="1" fill="#e6e67a"/>
<rect x="615" y="459" width="59" height="1" fill="#e6e67a"/>
<g transform="translate(626.5,455.8) skewX(-20)"><path d="M4.40,-5.87L3.67,-6.60L0.73,-6.60L0.00,-5.87L0.00,-0.73L0.73,0.00L3.67,0.00L4.40,-0.73M7.70,-6.60L7.70,0.00M12.10,-6.60L12.10,0.00M7.70,-3.30L12.10,-3.30M19.80,-6.60L15.40,-6.60L15.40,0.00L19.80,0.00M15.40,-3.30L18.70,-3.30M23.10,-6.60L23.10,0.00L27.50,0.00M30.79,-6.60L30.79,0.00M38.50,-5.87L37.77,-6.60L34.83,-6.60L34.10,-5.87L34.10,-0.73L34.83,0.00L37.77,0.00L38.50,-0.73" stroke="#f4f4f4" stroke-width="1.6" fill="none" stroke-linejoin="round" stroke-linecap="round"/><path d="M4.40,-5.87L3.67,-6.60L0.73,-6.60L0.00,-5.87L0.00,-0.73L0.73,0.00L3.67,0.00L4.40,-0.73M7.70,-6.60L7.70,0.00M12.10,-6.60L12.10,0.00M7.70,-3.30L12.10,-3.30M19.80,-6.60L15.40,-6.60L15.40,0.00L19.80,0.00M15.40,-3.30L18.70,-3.30M23.10,-6.60L23.10,0.00L27.50,0.00M30.79,-6.60L30.79,0.00M38.50,-5.87L37.77,-6.60L34.83,-6.60L34.10,-5.87L34.10,-0.73L34.83,0.00L37.77,0.00L38.50,-0.73" stroke="#000" stroke-width="0.45" fill="none"/></g>
<path d="M668.50,453.83L668.17,453.50L666.83,453.50L666.50,453.83L666.50,454.67L666.83,455.00L668.17,455.00L668.50,455.33L668.50,456.17L668.17,456.50L666.83,456.50L666.50,456.17M669.17,456.50L669.17,453.50L670.58,455.67L672.00,453.50L672.00,456.50" stroke="#e6e67a" stroke-width="0.9" fill="none" stroke-linecap="round" stroke-linejoin="round"/>
<path d="M618.81,463.43L620.06,463.43L620.37,463.74L620.37,464.99L620.06,465.30L618.81,465.30L618.50,464.99L618.50,463.74L618.81,463.43M618.41,465.55L620.46,462.75M623.82,463.06L624.50,462.50L624.50,465.30M627.84,462.50L626.44,462.50L626.13,462.81L626.13,464.99L626.44,465.30L627.69,465.30L628.00,464.99L628.00,464.15L627.69,463.84L626.44,463.84L626.13,464.15" stroke="#e6e67a" stroke-width="1.0" fill="none" stroke-linecap="round" stroke-linejoin="round"/>
<path d="M618.83,468.20L620.17,468.20L620.50,468.53L620.50,469.87L620.17,470.20L618.83,470.20L618.50,469.87L618.50,468.53L618.83,468.20M618.40,470.47L620.60,467.47M623.09,467.80L623.82,467.20L623.82,470.20M625.01,470.20L626.34,467.20M628.65,470.20L628.65,467.20L627.05,469.30L629.15,469.30M629.86,468.20L629.86,470.20M629.86,468.53L630.20,468.20L630.53,468.20L630.86,468.53L630.86,470.20M630.86,468.53L631.20,468.20L631.53,468.20L631.86,468.53L631.86,470.20M632.57,468.20L632.57,470.20M632.57,468.53L632.91,468.20L633.24,468.20L633.57,468.53L633.57,470.20M633.57,468.53L633.91,468.20L634.24,468.20L634.57,468.53L634.57,470.20M637.16,468.70L638.82,468.70L639.16,469.03L639.16,469.87L638.82,470.20L637.16,470.20L637.16,467.20L638.82,467.20L639.16,467.53L639.16,468.37L638.82,468.70M641.87,467.53L641.53,467.20L640.20,467.20L639.87,467.53L639.87,468.37L640.20,468.70L641.53,468.70L641.87,469.03L641.87,469.87L641.53,470.20L640.20,470.20L639.87,469.87M642.58,470.20L642.58,467.20L644.24,467.20L644.58,467.53L644.58,468.37L644.24,468.70L642.58,468.70M647.50,468.20L648.83,468.20L649.16,468.53L649.16,469.87L648.83,470.20L647.50,470.20L647.16,469.87L647.16,468.53L647.50,468.20M647.06,470.47L649.26,467.47M651.75,467.87L651.75,467.53L652.08,467.20L653.41,467.20L653.75,467.53L653.75,468.20L651.75,470.20L653.75,470.20M654.79,467.20L656.12,467.20L656.46,467.53L656.46,469.87L656.12,470.20L654.79,470.20L654.46,469.87L654.46,467.53L654.79,467.20M657.17,470.20L657.17,467.20L658.58,469.37L660.00,467.20L660.00,470.20" stroke="#e6e67a" stroke-width="1.0" fill="none" stroke-linecap="round" stroke-linejoin="round"/>
<path d="M639.00,498.93L639.00,499.47L639.53,500.00L641.13,500.00L641.67,499.47L641.67,495.20M645.17,495.73L644.64,495.20L642.51,495.20L641.97,495.73L641.97,497.07L642.51,497.60L644.64,497.60L645.17,498.13L645.17,499.47L644.64,500.00L642.51,500.00L641.97,499.47M645.48,495.20L645.48,500.00M645.79,496.27L645.79,495.73L646.33,495.20L648.46,495.20L648.99,495.73L648.99,496.80L645.79,500.00L648.99,500.00M649.83,495.20L651.97,495.20L652.50,495.73L652.50,499.47L651.97,500.00L649.83,500.00L649.30,499.47L649.30,495.73L649.83,495.20" stroke="#5cd85c" stroke-width="0.9" fill="none" stroke-linecap="round" stroke-linejoin="round"/>
<rect x="474" y="331" width="1" height="156" fill="#5cd85c"/>
<rect x="739" y="333" width="1" height="98" fill="#5cd85c"/>
<rect x="474" y="336" width="266" height="1" fill="#5cd85c"/>
<path d="M474.50,336.00 L480.00,335.60 L480.00,335.00 L484.50,335.00 L484.50,338.00 L480.00,338.00 L480.00,337.40 L474.50,337.00 Z" fill="#22ff22"/>
<path d="M739.50,337.00 L734.00,337.40 L734.00,338.00 L729.50,338.00 L729.50,335.00 L734.00,335.00 L734.00,335.60 L739.50,336.00 Z" fill="#22ff22"/>
<rect x="474" y="366" width="266" height="1" fill="#5cd85c"/>
<path d="M474.50,366.00 L480.00,365.60 L480.00,365.00 L484.50,365.00 L484.50,368.00 L480.00,368.00 L480.00,367.40 L474.50,367.00 Z" fill="#22ff22"/>
<path d="M549.50,366.00 L555.00,365.60 L555.00,365.00 L559.50,365.00 L559.50,368.00 L555.00,368.00 L555.00,367.40 L549.50,367.00 Z" fill="#22ff22"/>
<path d="M739.50,367.00 L734.00,367.40 L734.00,368.00 L729.50,368.00 L729.50,365.00 L734.00,365.00 L734.00,365.60 L739.50,366.00 Z" fill="#22ff22"/>
<rect x="549" y="363" width="1" height="69" fill="#5cd85c"/>
<rect x="474" y="397" width="116" height="1" fill="#5cd85c"/>
<path d="M474.50,397.00 L480.00,396.60 L480.00,396.00 L484.50,396.00 L484.50,399.00 L480.00,399.00 L480.00,398.40 L474.50,398.00 Z" fill="#22ff22"/>
<path d="M549.50,397.00 L555.00,396.60 L555.00,396.00 L559.50,396.00 L559.50,399.00 L555.00,399.00 L555.00,398.40 L549.50,398.00 Z" fill="#22ff22"/>
<circle cx="543.5" cy="397.5" r="2.7" fill="#22ff22"/>
<rect x="543" y="397" width="1" height="77" fill="#5cd85c"/>
<path d="M611.50,320.50L606.50,320.50L605.50,321.50L605.50,329.50L606.50,330.50L610.50,330.50L611.50,329.50L611.50,326.50L610.50,325.50L606.50,325.50L605.50,326.50M621.50,324.50L620.50,325.50L616.50,325.50L615.50,324.50L615.50,321.50L616.50,320.50L620.50,320.50L621.50,321.50L621.50,329.50L620.50,330.50L615.50,330.50" stroke="#5cd85c" stroke-width="1.0" fill="none" stroke-linecap="round" stroke-linejoin="round"/>
<path d="M496.50,353.50L498.50,351.50L498.50,360.50M510.50,355.50L509.50,356.50L504.50,356.50L503.50,355.50L503.50,352.50L504.50,351.50L509.50,351.50L510.50,352.50L510.50,359.50L509.50,360.50L504.50,360.50M513.50,360.50L513.50,360.50M525.50,351.50L519.50,351.50L518.50,355.50L519.50,355.50L523.50,355.50L525.50,356.50L525.50,359.50L523.50,360.50L519.50,360.50L518.50,359.50" stroke="#5cd85c" stroke-width="1.0" fill="none" stroke-linecap="round" stroke-linejoin="round"/>
<path d="M634.50,361.50L634.50,352.50L629.50,358.50L635.50,358.50M645.50,356.50L644.50,357.50L640.50,357.50L639.50,356.50L639.50,353.50L640.50,352.50L644.50,352.50L645.50,353.50L645.50,360.50L644.50,361.50L639.50,361.50M649.50,361.50L649.50,361.50M660.50,352.50L654.50,352.50L654.50,356.50L655.50,355.50L659.50,355.50L660.50,356.50L660.50,360.50L659.50,361.50L655.50,361.50L654.50,360.50" stroke="#5cd85c" stroke-width="1.0" fill="none" stroke-linecap="round" stroke-linejoin="round"/>
<path d="M500.50,384.50L502.50,382.50L502.50,392.50M508.50,387.50L507.50,386.50L507.50,383.50L508.50,382.50L513.50,382.50L514.50,383.50L514.50,386.50L513.50,387.50L508.50,387.50L507.50,388.50L507.50,391.50L508.50,392.50L513.50,392.50L514.50,391.50L514.50,388.50L513.50,387.50" stroke="#5cd85c" stroke-width="1.0" fill="none" stroke-linecap="round" stroke-linejoin="round"/>
<path d="M569.50,384.50L571.50,382.50L571.50,392.50M577.50,391.50L577.50,392.50M588.50,382.50L582.50,382.50L581.50,386.50L582.50,386.50L587.50,386.50L588.50,387.50L588.50,391.50L587.50,392.50L582.50,392.50L581.50,391.50" stroke="#5cd85c" stroke-width="1.0" fill="none" stroke-linecap="round" stroke-linejoin="round"/>
<rect x="402" y="476" width="139" height="1" fill="#5cd85c"/>
<rect x="402" y="525" width="139" height="1" fill="#5cd85c"/>
<rect x="405" y="476" width="1" height="50" fill="#5cd85c"/>
<path d="M406.00,476.50 L406.40,482.00 L407.00,482.00 L407.00,486.50 L404.00,486.50 L404.00,482.00 L404.60,482.00 L405.00,476.50 Z" fill="#22ff22"/>
<path d="M405.00,525.50 L404.60,520.00 L404.00,520.00 L404.00,515.50 L407.00,515.50 L407.00,520.00 L406.40,520.00 L406.00,525.50 Z" fill="#22ff22"/>
<g transform="rotate(-90)"><path d="M-512.50,394.50L-508.50,394.50L-507.50,395.50L-507.50,399.50L-508.50,400.50L-512.50,400.50L-513.50,399.50L-513.50,395.50L-512.50,394.50M-514.50,401.50L-507.50,392.50M-503.50,393.50L-500.50,391.50L-500.50,400.50M-494.50,391.50L-488.50,391.50L-492.50,395.50L-489.50,395.50L-488.50,396.50L-488.50,399.50L-489.50,400.50L-493.50,400.50L-494.50,399.50" stroke="#5cd85c" stroke-width="1.0" fill="none" stroke-linecap="round" stroke-linejoin="round"/></g>
<rect x="391" y="481" width="1" height="5" fill="#5cd85c"/>
<g transform="rotate(-90)"><path d="M-477.50,388.50L-475.50,388.50L-474.50,389.50L-474.50,393.50L-475.50,394.50L-477.50,394.50L-478.50,393.50L-478.50,389.50L-477.50,388.50M-472.50,394.50L-472.50,394.50M-469.50,388.50L-466.50,388.50L-466.50,389.50L-466.50,393.50L-466.50,394.50L-469.50,394.50L-469.50,393.50L-469.50,389.50L-469.50,388.50M-460.50,388.50L-463.50,388.50L-464.50,391.50L-463.50,390.50L-460.50,390.50L-460.50,391.50L-460.50,393.50L-460.50,394.50L-463.50,394.50L-464.50,393.50" stroke="#5cd85c" stroke-width="1.0" fill="none" stroke-linecap="round" stroke-linejoin="round"/></g>
<g transform="rotate(-90)"><path d="M-477.50,379.50L-475.50,379.50L-474.50,380.50L-474.50,384.50L-475.50,385.50L-477.50,385.50L-478.50,384.50L-478.50,380.50L-477.50,379.50" stroke="#5cd85c" stroke-width="1.0" fill="none" stroke-linecap="round" stroke-linejoin="round"/></g>
<rect x="433" y="485" width="97" height="1" fill="#5cd85c"/>
<rect x="433" y="516" width="93" height="1" fill="#5cd85c"/>
<rect x="436" y="485" width="1" height="32" fill="#5cd85c"/>
<path d="M437.00,485.50 L437.40,491.00 L438.00,491.00 L438.00,495.50 L435.00,495.50 L435.00,491.00 L435.60,491.00 L436.00,485.50 Z" fill="#22ff22"/>
<path d="M436.00,516.50 L435.60,511.00 L435.00,511.00 L435.00,506.50 L438.00,506.50 L438.00,511.00 L437.40,511.00 L437.00,516.50 Z" fill="#22ff22"/>
<g transform="rotate(-90)"><path d="M-509.50,425.50L-505.50,425.50L-503.50,426.50L-503.50,430.50L-505.50,431.50L-509.50,431.50L-510.50,430.50L-510.50,426.50L-509.50,425.50M-510.50,432.50L-503.50,422.50M-499.50,426.50L-500.50,425.50L-500.50,423.50L-499.50,422.50L-495.50,422.50L-494.50,423.50L-494.50,425.50L-495.50,426.50L-499.50,426.50L-500.50,427.50L-500.50,430.50L-499.50,431.50L-495.50,431.50L-494.50,430.50L-494.50,427.50L-495.50,426.50" stroke="#5cd85c" stroke-width="1.0" fill="none" stroke-linecap="round" stroke-linejoin="round"/></g>
<rect x="758" y="397" width="91" height="1" fill="#5cd85c"/>
<line x1="758.5" y1="397.5" x2="714.8" y2="490.8" stroke="#5cd85c" stroke-width="1"/>
<path d="M714.35,490.59 L716.55,484.94 L716.01,484.68 L718.11,480.20 L720.82,481.47 L718.72,485.96 L718.18,485.70 L715.25,491.01 Z" fill="#22ff22"/>
<path d="M770.50,386.50L770.50,385.50L771.50,384.50L774.50,384.50L775.50,385.50L775.50,386.50L770.50,392.50L775.50,392.50M778.50,388.50L784.50,388.50M788.50,392.50L788.50,384.50L791.50,390.50L795.50,384.50L795.50,392.50M804.50,384.50L799.50,384.50L799.50,387.50L799.50,387.50L803.50,387.50L804.50,388.50L804.50,391.50L803.50,392.50L799.50,392.50L799.50,391.50M807.50,386.50L812.50,392.50M812.50,386.50L807.50,392.50M816.50,384.50L820.50,384.50L821.50,385.50L821.50,391.50L820.50,392.50L816.50,392.50L816.50,391.50L816.50,385.50L816.50,384.50M824.50,392.50L824.50,392.50M830.50,388.50L829.50,387.50L829.50,385.50L830.50,384.50L833.50,384.50L834.50,385.50L834.50,387.50L833.50,388.50L830.50,388.50L829.50,389.50L829.50,391.50L830.50,392.50L833.50,392.50L834.50,391.50L834.50,389.50L833.50,388.50M837.50,386.50L837.50,395.50M837.50,387.50L838.50,386.50L842.50,386.50L843.50,387.50L843.50,391.50L842.50,392.50L838.50,392.50L837.50,391.50" stroke="#5cd85c" stroke-width="1.0" fill="none" stroke-linecap="round" stroke-linejoin="round"/>
<path d="M491.5,582.5 L487.5,578.5 L487.5,574 L489.5,570.5 L493.5,567.5 L499.5,567.5 L504,569 L507.5,571.5 L508.8,574 L508.8,577.5 L506.8,580.3 L504,582.5 L502.5,582.5 L502.5,576.4 L501.5,575 L500,574.5 L496,574.5 L494.7,575.4 L493.5,577 L493.5,582.5 Z" stroke="#e6e67a" stroke-width="1" fill="none" />
<line x1="493.5" y1="567.5" x2="497.6" y2="561.3" stroke="#e6e67a" stroke-width="1"/>
<line x1="504.2" y1="569" x2="505.9" y2="560.4" stroke="#e6e67a" stroke-width="1"/>
<line x1="534.6" y1="506.2" x2="501.5" y2="563.3" stroke="#e6e67a" stroke-width="1"/>
<path d="M535.63,505.45 L533.76,509.45 L534.28,509.76 L532.46,512.87 L529.87,511.35 L531.69,508.24 L532.21,508.55 L534.77,504.95 Z" fill="#e6e67a"/>
<rect x="493" y="583" width="1" height="23" fill="#5cd85c"/>
<rect x="502" y="583" width="1" height="23" fill="#5cd85c"/>
<rect x="474" y="601" width="57" height="1" fill="#5cd85c"/>
<path d="M493.50,602.00 L488.00,602.40 L488.00,603.00 L483.50,603.00 L483.50,600.00 L488.00,600.00 L488.00,600.60 L493.50,601.00 Z" fill="#22ff22"/>
<path d="M502.50,601.00 L508.00,600.60 L508.00,600.00 L512.50,600.00 L512.50,603.00 L508.00,603.00 L508.00,602.40 L502.50,602.00 Z" fill="#22ff22"/>
<path d="M524.50,586.50L519.50,586.50L518.50,587.50L518.50,595.50L519.50,596.50L524.50,596.50L525.50,595.50L525.50,592.50L524.50,591.50L519.50,591.50L518.50,592.50" stroke="#5cd85c" stroke-width="1.0" fill="none" stroke-linecap="round" stroke-linejoin="round"/>
</svg>
</body></html>
